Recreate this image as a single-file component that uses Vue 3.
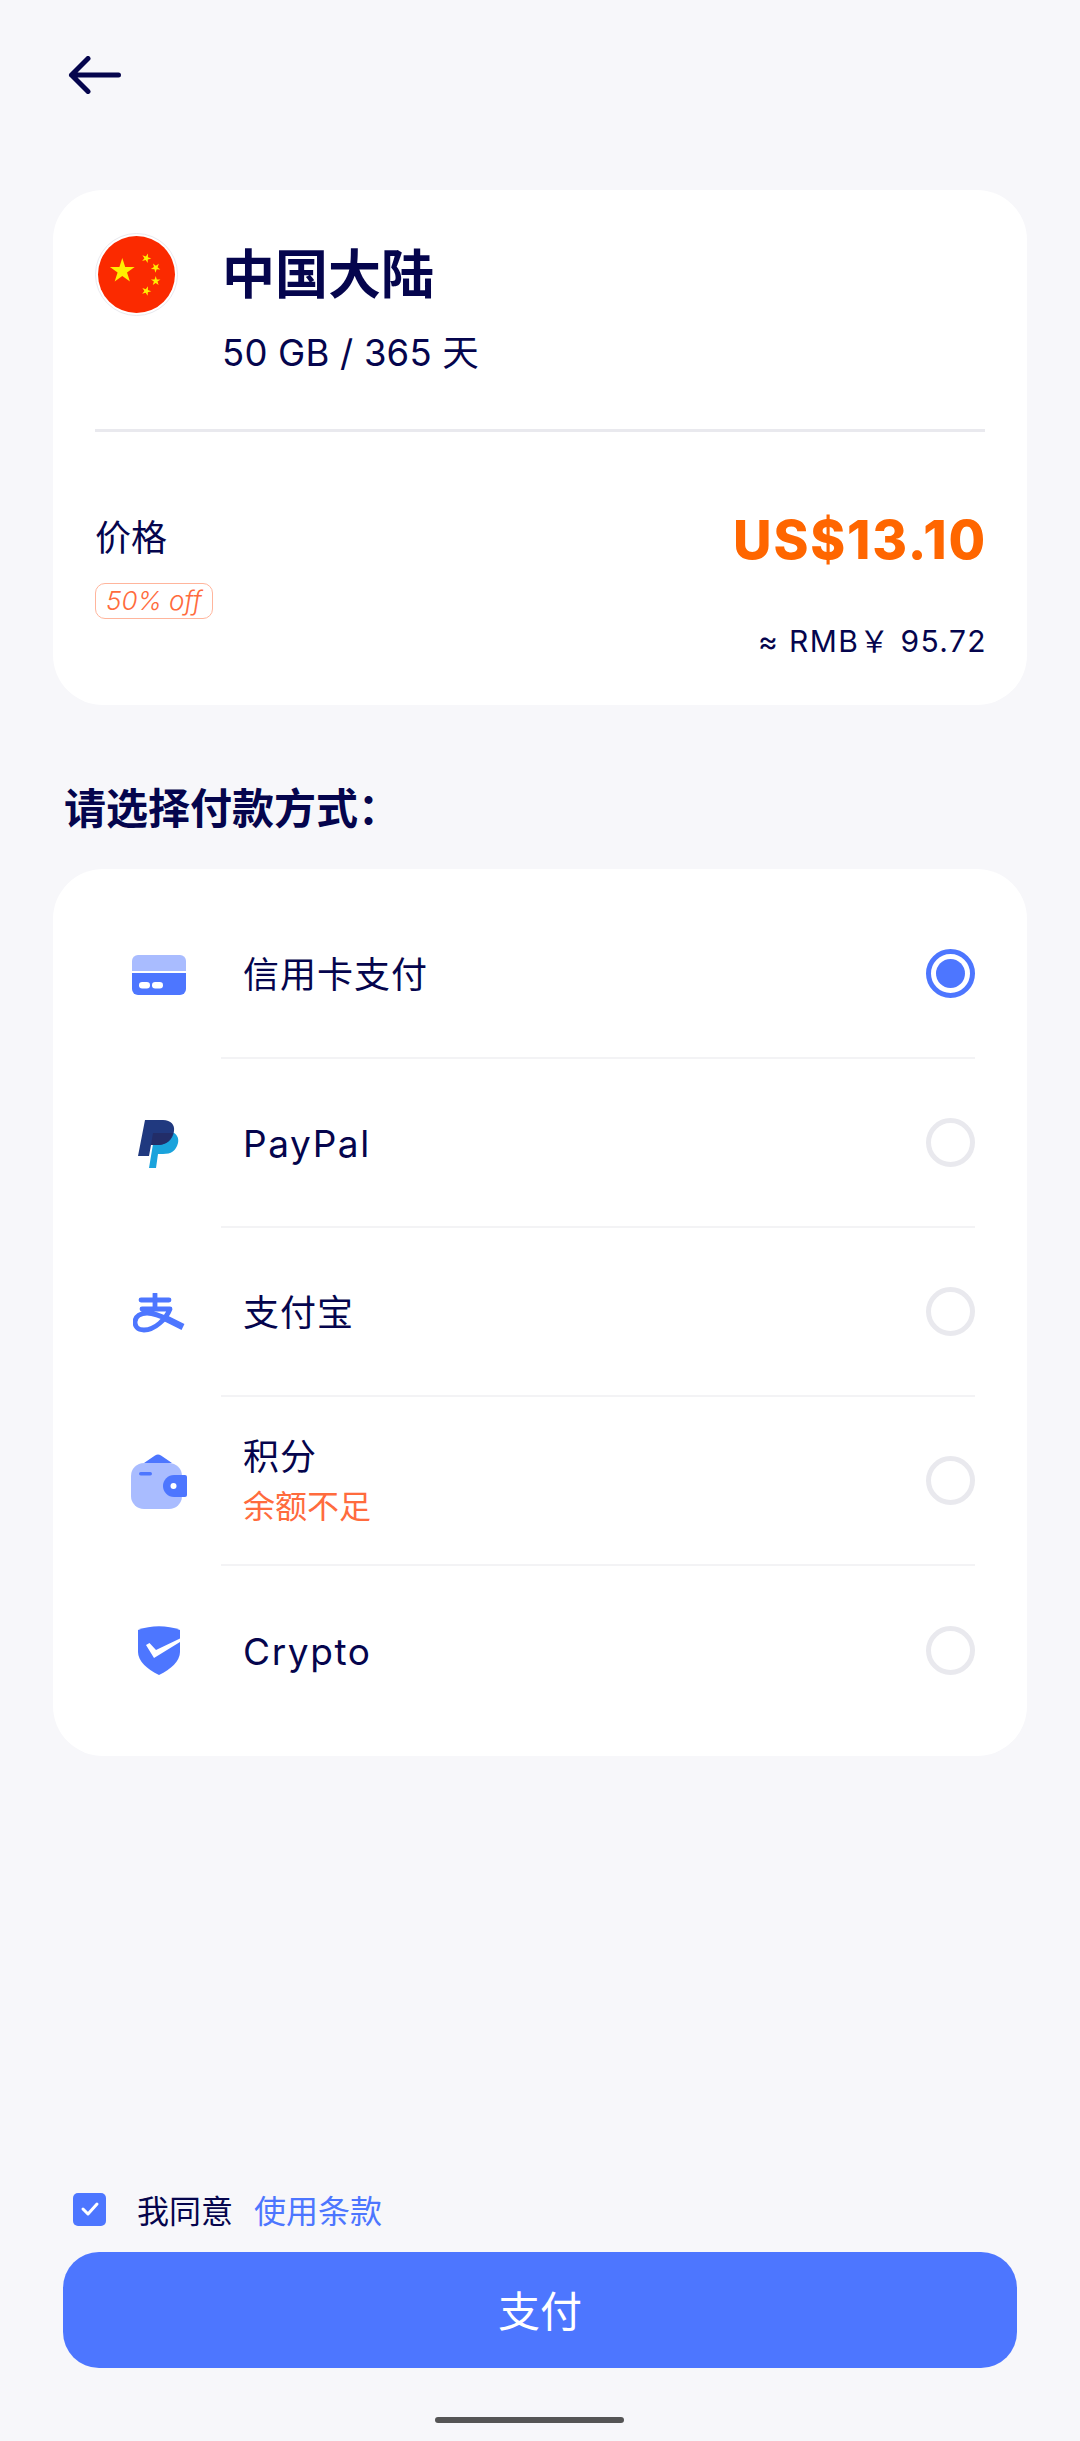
<template>
  <div class="page">
    <button class="back" type="button" aria-label="返回">
      <svg width="53" height="38" viewBox="0 0 53 38" fill="none" stroke="#05054d" stroke-width="5" stroke-linecap="round" stroke-linejoin="round">
        <path d="M50.500 19H3.500M20 2.500 3.500 19 20 35.500" />
      </svg>
    </button>

    <!-- 套餐信息 -->
    <section class="card plan">
      <div class="plan-head">
        <svg class="flag" width="83" height="83" viewBox="0 0 83 83">
          <circle cx="41.500" cy="41.500" r="41" fill="#fff" stroke="#e9e9ee" />
          <circle cx="41.500" cy="41.500" r="38.500" fill="#fb2a00" />
          <path v-for="s in stars" :key="s.y" :d="starPath(s)" fill="#ffee00" />
        </svg>
        <div class="plan-text">
          <h1>中国大陆</h1>
          <p>50 GB / 365 天</p>
        </div>
      </div>
      <div class="price-row">
        <div>
          <div class="price-label">价格</div>
          <span class="off">50% off</span>
        </div>
        <div class="price-right">
          <div class="price">US$13.10</div>
          <div class="rmb">≈ RMB￥ 95.72</div>
        </div>
      </div>
    </section>

    <h2 class="pay-title">请选择付款方式：</h2>

    <!-- 付款方式 -->
    <section class="card methods">
      <div v-for="(m, i) in methods" :key="m.id" class="method" @click="selected = m.id">
        <div class="method-icon">
          <svg v-if="m.id === 'card'" width="54" height="40" viewBox="0 0 54 40">
            <path d="M0 16V6a6 6 0 0 1 6-6h42a6 6 0 0 1 6 6v10z" fill="#a9bcff" />
            <path d="M0 18h54v16a6 6 0 0 1-6 6H6a6 6 0 0 1-6-6z" fill="#4d76ff" />
            <rect x="7" y="27" width="11" height="6.500" rx="3.200" fill="#fff" />
            <rect x="20" y="27" width="11" height="6.500" rx="3.200" fill="#fff" />
          </svg>
          <svg v-else-if="m.id === 'paypal'" width="42" height="48" viewBox="0 0 42 48">
            <path d="M34 12c5 2 7 6 6 11-2 8-7 11-15 11h-5l-2 14H11l6-36z" fill="#1aa3dc" />
            <path d="M7 0h18c8 0 12 5 11 11-1 9-8 14-16 14h-7l-2 11H0z" fill="#20397f" />
            <path d="M15 13h20c-2 8-8 12-15 12h-7z" fill="#222d68" />
          </svg>
          <svg v-else-if="m.id === 'alipay'" width="52" height="40" viewBox="0 0 52 40" fill="none" stroke="#4d76ff" stroke-width="4.800" stroke-linecap="round" stroke-linejoin="round">
            <path d="M8 7H36M22 1V16M9 16H37C33 26 22 37 11 37 4 37 2 33 2 29 2 23 8 20 14 20 22 20 30 24 36 27" />
            <path d="M32 25 50 34" stroke-width="6.500" stroke-linecap="butt" />
          </svg>
          <svg v-else-if="m.id === 'points'" width="56" height="56" viewBox="0 0 56 56">
            <path d="M13 9 24 1.500a5 5 0 0 1 6 0L41 9z" fill="#4d76ff" />
            <rect x="0" y="9" width="51" height="46" rx="13" fill="#a9bcff" />
            <rect x="8" y="18" width="13" height="3.500" rx="1.700" fill="#4d76ff" />
            <path d="M43 21h11a2 2 0 0 1 2 2v18a2 2 0 0 1-2 2H43a11 11 0 0 1 0-22z" fill="#4d76ff" />
            <circle cx="42.500" cy="32" r="3" fill="#fff" />
          </svg>
          <svg v-else width="42" height="49" viewBox="0 0 42 49">
            <path d="M0 4C13-1 29-1 42 4v22c0 9-9 17-21 23C9 43 0 35 0 26z" fill="#4d76ff" />
            <path d="M8 19 11.500 17 18 24 42 12.500V16L16 32z" fill="#fff" />
          </svg>
        </div>
        <div class="method-body" :class="{ last: i === methods.length - 1 }">
          <div class="method-text">
            <div class="method-name" :class="{ latin: m.latin }">{{ m.name }}</div>
            <div v-if="m.note" class="method-note">{{ m.note }}</div>
          </div>
          <span class="radio" :class="{ on: selected === m.id }"></span>
        </div>
      </div>
    </section>

    <!-- 底部 -->
    <footer class="foot">
      <label class="agree">
        <span class="check">
          <svg width="20" height="16" viewBox="0 0 20 16" fill="none" stroke="#fff" stroke-width="3" stroke-linecap="round" stroke-linejoin="round">
            <path d="M3 8l5 5 9-10" />
          </svg>
        </span>
        <span class="agree-text">我同意</span>
        <a class="terms">使用条款</a>
      </label>
      <button class="pay" type="button">支付</button>
      <div class="home-bar"></div>
    </footer>
  </div>
</template>

<script setup>
import { ref } from 'vue'

const selected = ref('card')

const methods = [
  { id: 'card', name: '信用卡支付' },
  { id: 'paypal', name: 'PayPal', latin: true },
  { id: 'alipay', name: '支付宝' },
  { id: 'points', name: '积分', note: '余额不足' },
  { id: 'crypto', name: 'Crypto', latin: true }
]

const stars = [
  { x: 27.3, y: 38, r: 13, a: 0 },
  { x: 51.3, y: 25.3, r: 5, a: 20 },
  { x: 60.7, y: 34.7, r: 5, a: 40 },
  { x: 60.7, y: 48, r: 5, a: 0 },
  { x: 51.3, y: 58, r: 5, a: 20 }
]

function starPath({ x, y, r, a }) {
  const pts = []
  for (let i = 0; i < 10; i++) {
    const rad = i % 2 ? r * 0.382 : r
    const t = ((a + i * 36 - 90) * Math.PI) / 180
    pts.push(`${(x + rad * Math.cos(t)).toFixed(2)} ${(y + rad * Math.sin(t)).toFixed(2)}`)
  }
  return 'M' + pts.join('L') + 'z'
}
</script>

<style scoped>
.page {
  --ink: #05054d;
  --blue: #4d76ff;
  min-height: 2441px;
  box-sizing: border-box;
  display: flex;
  flex-direction: column;
  background: #f7f7fa;
  color: var(--ink);
  font-family: Inter, "Noto Sans CJK SC", sans-serif;
  padding: 0 53px;
}
.back {
  align-self: flex-start;
  margin: 56px 0 0 15px;
  padding: 0;
  height: 38px;
  border: 0;
  background: none;
  display: block;
}
.card {
  background: #fff;
  border-radius: 50px;
}
.plan {
  margin-top: 96px;
  height: 515px;
  box-sizing: border-box;
  padding: 42px 42px 0 42px;
}
.plan-head {
  display: flex;
  gap: 44px;
  height: 200px;
  box-sizing: border-box;
  border-bottom: 3px solid #e9e9ee;
}
.flag { flex: none; margin-top: 1px; }
.plan-text h1 {
  margin: 13px 0 0;
  font-size: 53px;
  line-height: 60px;
  font-weight: 700;
}
.plan-text p {
  margin: 24px 0 0;
  font-size: 36.5px;
  line-height: 48px;
  letter-spacing: 0.2px;
}
.price-row {
  display: flex;
  justify-content: space-between;
  padding-top: 81px;
}
.price-label {
  font-size: 36px;
  line-height: 50px;
}
.off {
  display: inline-block;
  margin-top: 20px;
  padding: 0 10px;
  height: 34px;
  line-height: 33px;
  font-size: 26px;
  font-style: italic;
  font-weight: 300;
  color: #ff6b3d;
  border: 1px solid #ffb59c;
  border-radius: 10px;
}
.price-right { text-align: right; margin: -5px -2px 0 0; }
.price {
  font-size: 53px;
  line-height: 64px;
  font-weight: 800;
  letter-spacing: 1.8px;
  color: #ff6600;
}
.rmb {
  margin-top: 49px;
  font-size: 30px;
  line-height: 40px;
  letter-spacing: 1.4px;
}
.pay-title {
  margin: 75px 0 0 11px;
  font-size: 42px;
  line-height: 58px;
  font-weight: 700;
}
.methods {
  margin-top: 31px;
  padding: 21px 52px 21px 0;
}
.method {
  display: flex;
  height: 169px;
  cursor: pointer;
}
.method-icon {
  flex: none;
  width: 168px;
  box-sizing: border-box;
  padding-left: 43px;
  display: flex;
  align-items: center;
  justify-content: center;
}
.method-body {
  flex: 1;
  display: flex;
  align-items: center;
  justify-content: space-between;
  border-bottom: 2px solid #f3f3f5;
}
.method-body.last { border-bottom: 0; }
.method-text { margin-left: 22px; padding-top: 3px; }
.method-name {
  font-size: 36px;
  line-height: 50px;
  letter-spacing: 1px;
}
.method-name.latin { font-size: 37px; letter-spacing: 1.6px; }
.method-note {
  font-size: 32px;
  line-height: 50px;
  color: #ff6b3d;
}
.radio {
  width: 49px;
  height: 49px;
  box-sizing: border-box;
  border-radius: 50%;
  border: 5px solid #e9e9ee;
  position: relative;
}
.radio.on { border-color: var(--blue); }
.radio.on::after {
  content: "";
  position: absolute;
  inset: 5px;
  border-radius: 50%;
  background: var(--blue);
}
.foot {
  margin-top: auto;
  display: flex;
  flex-direction: column;
}
.agree {
  display: flex;
  align-items: center;
  height: 46px;
  padding-left: 20px;
  font-size: 32px;
}
.check {
  width: 33px;
  height: 33px;
  border-radius: 5px;
  background: var(--blue);
  display: flex;
  align-items: center;
  justify-content: center;
  margin-right: 31px;
}
.agree-text { margin-right: 21px; }
.terms { color: var(--blue); }
.pay {
  margin: 20px 10px 0;
  height: 116px;
  padding: 0 0 4px;
  border: 0;
  border-radius: 36px;
  background: var(--blue);
  color: #fff;
  font: inherit;
  font-size: 42px;
}
.home-bar {
  align-self: flex-start;
  width: 189px;
  height: 6px;
  margin: 49px 0 18px 382px;
  border-radius: 3px;
  background: #555;
}
</style>

<style>
html, body { margin: 0; background: #f7f7fa; }
</style>
